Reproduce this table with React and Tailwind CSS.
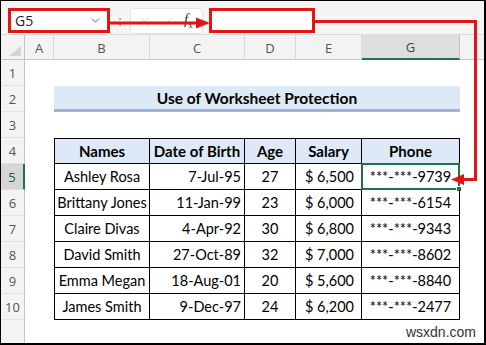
import { ChevronDown, X, Check } from "lucide-react";
import clsx from "clsx";

const COLS = "grid grid-cols-[24px_29px_96px_95px_51px_66px_98px_1fr]";

const rows = [
  { name: "Ashley Rosa", dob: "7-Jul-95", age: 27, sal: "6,500", ph: "9739" },
  { name: "Brittany Jones", dob: "11-Jan-99", age: 23, sal: "6,000", ph: "6154" },
  { name: "Claire Divas", dob: "4-Apr-92", age: 30, sal: "6,800", ph: "9343" },
  { name: "David Smith", dob: "27-Oct-89", age: 32, sal: "7,000", ph: "8602" },
  { name: "Emma Megan", dob: "18-Aug-01", age: 20, sal: "5,600", ph: "8840" },
  { name: "James Smith", dob: "9-Dec-97", age: 24, sal: "6,200", ph: "2477" },
];

function RowHead({ n, sel }) {
  return (
    <div
      className={clsx(
        "flex items-center justify-center pt-[3px] border-b border-b-[#e1e1e1] text-[13px] font-['Open_Sans',sans-serif]",
        sel
          ? "bg-[#d6d6d6] border-r-2 border-r-[#217346] text-[#185c37]"
          : "bg-[#f3f3f3] border-r border-r-[#c6c6c6] text-[#555]"
      )}
    >
      {n}
    </div>
  );
}

function Cell({ className, children }) {
  return (
    <div className={clsx("flex items-center border-r border-b border-black text-black whitespace-nowrap", className)}>
      {children}
    </div>
  );
}

export default function App() {
  return (
    <div className="relative w-[486px] h-[345px] bg-white border-t border-l border-r-2 border-b-2 border-black flex flex-col overflow-hidden font-['Lato',sans-serif]">
      {/* formula bar */}
      <div className="h-[34px] shrink-0 bg-[#f5f5f5] border-b border-[#dcdcdc] flex items-start pt-[7px] pl-[7px]">
        <div className="w-[102px] h-[25px] border-[3px] border-[#e01515] bg-white flex items-center justify-between pl-[4px] pr-[5px] font-['Open_Sans',sans-serif]">
          <span className="text-[14px] text-[#222]">G5</span>
          <ChevronDown size={13} strokeWidth={1.6} className="text-[#444]" />
        </div>
        <div className="w-[20px] h-[25px] flex items-center justify-center text-[15px] text-[#999]">:</div>
        <div className="w-[73px] h-[26px] rounded-[4px] border border-[#e2e2e2] bg-white flex items-center pl-[6px] gap-[8px]">
          <X size={15} strokeWidth={1.2} className="text-[#c4c4c4]" />
          <Check size={15} strokeWidth={1.2} className="text-[#c4c4c4]" />
          <span className="italic text-[15px] text-[#333] font-['Liberation_Serif',serif] ml-[1px] leading-none">
            f<span className="text-[9px] not-italic align-sub">x</span>
          </span>
        </div>
        <div className="ml-[6px] w-[106px] h-[25px] border-[3px] border-[#e01515] bg-white" />
      </div>

      {/* sheet */}
      <div className={clsx(COLS, "grid-rows-[25px] auto-rows-[26px] shrink-0")}>
        {/* column headers */}
        <div className="relative bg-[#f3f3f3] border-r border-b border-[#c6c6c6]">
          <div className="absolute right-[3px] bottom-[3px] w-0 h-0 border-l-[12px] border-l-transparent border-b-[10px] border-b-[#d4d4d4]" />
        </div>
        {["A", "B", "C", "D", "E"].map((c) => (
          <div
            key={c}
            className="flex items-center justify-center pt-[3px] bg-[#f3f3f3] border-r border-r-[#dadada] border-b border-b-[#c6c6c6] text-[13px] text-[#555] font-['Open_Sans',sans-serif]"
          >
            {c}
          </div>
        ))}
        <div className="flex items-center justify-center pt-[3px] bg-[#dedede] border-r border-r-[#c6c6c6] border-b-2 border-b-[#217346] text-[13px] text-[#185c37] font-['Open_Sans',sans-serif]">
          G
        </div>
        <div className="bg-[#f3f3f3] border-b border-b-[#c6c6c6]" />

        {/* row 1 */}
        <RowHead n={1} />
        <div className="col-span-7" />

        {/* row 2 */}
        <RowHead n={2} />
        <div />
        <div className="col-span-5 flex items-center justify-center pt-[2px] bg-[#dde9f6] border-b-[3px] border-b-[#9cb3da] font-bold text-[15.5px] text-black">
          Use of Worksheet Protection
        </div>
        <div />

        {/* row 3 */}
        <RowHead n={3} />
        <div className="col-span-7" />

        {/* row 4 */}
        <RowHead n={4} />
        <div />
        {["Names", "Date of Birth", "Age", "Salary", "Phone"].map((h, i) => (
          <Cell
            key={h}
            className={clsx("justify-center font-bold text-[15px] border-t bg-[#dde9f6]", i === 0 && "border-l")}
          >
            {h}
          </Cell>
        ))}
        <div />

        {rows.map((r, i) => (
          <div key={r.name} className="contents text-[14.5px]">
            <RowHead n={i + 5} sel={i === 0} />
            <div />
            <Cell className="justify-center border-l">{r.name}</Cell>
            <Cell className="justify-end pr-[3px]">{r.dob}</Cell>
            <Cell className="justify-center">{r.age}</Cell>
            <Cell className="justify-between pl-[9px] pr-[7px]">
              <span>$</span>
              <span>{r.sal}</span>
            </Cell>
            <Cell className="relative justify-center">
              ***-***-{r.ph}
              {i === 0 && (
                <div className="absolute -left-[1px] -top-[1px] -right-[1px] -bottom-[1px] border-2 border-[#217346]">
                  <div className="absolute -right-[4px] -bottom-[4px] w-[6px] h-[6px] bg-[#217346] border border-white" />
                </div>
              )}
            </Cell>
            <div />
          </div>
        ))}
      </div>

      {/* filler below */}
      <div className={clsx(COLS, "flex-1")}>
        <div className="bg-[#f3f3f3] border-r border-r-[#c6c6c6]" />
        <div className="col-span-7 flex items-end justify-end pr-[8px] text-[14px] text-[#333] font-['Liberation_Sans',sans-serif]">
          wsxdn.com
        </div>
      </div>

      {/* red arrows overlay */}
      <svg className="absolute left-0 top-0 pointer-events-none" width="486" height="345">
        <line x1="109" y1="22" x2="198" y2="22" stroke="#e01515" strokeWidth="3" />
        <polygon points="195,16.5 209,22 195,27.5" fill="#e01515" />
        <polyline points="314,20.5 474.5,20.5 474.5,178.5 461,178.5" fill="none" stroke="#e01515" strokeWidth="3" />
        <polygon points="463,173 450,178.5 463,184" fill="#e01515" />
      </svg>
    </div>
  );
}
